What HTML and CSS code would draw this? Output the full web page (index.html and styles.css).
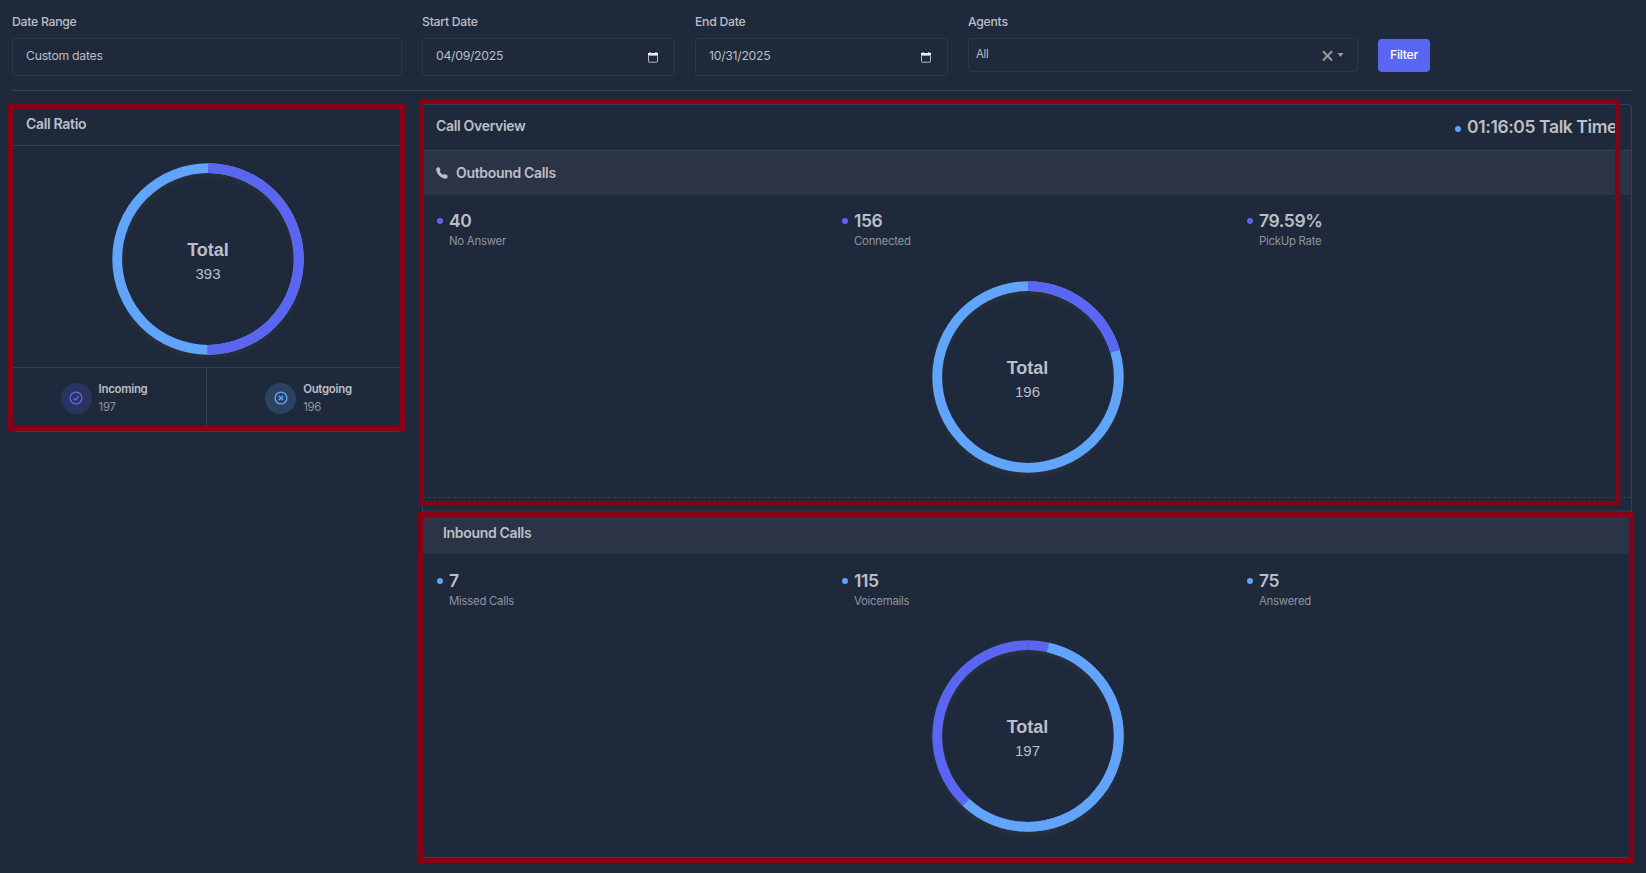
FILE: index.html
```html
<!DOCTYPE html>
<html lang="en">
  <head>
    <meta charset="UTF-8" />
    <meta name="viewport" content="width=device-width, initial-scale=1.0" />
    <title>Call Dashboard</title>
    <link rel="stylesheet" href="styles.css">
  </head>
  <body>
    <div class="filters">
      <div class="field">
        <div class="field-label">Date Range</div>
        <div class="field-input">Custom dates</div>
      </div>
      <div class="field field-sm">
        <div class="field-label">Start Date</div>
        <div class="field-input">
          04/09/2025
          <svg class="calendar" width="10" height="11" viewBox="0 0 10 11">
            <path d="M1.5 0h1v1h5V0h1v1H10v2.500H0V1h1.5z" fill="#fff" />
            <rect x="0.5" y="3" width="9" height="7.2" rx="0.6" fill="none" stroke="#b4b8be" />
          </svg>
        </div>
      </div>
      <div class="field field-sm">
        <div class="field-label">End Date</div>
        <div class="field-input">
          10/31/2025
          <svg class="calendar" width="10" height="11" viewBox="0 0 10 11">
            <path d="M1.5 0h1v1h5V0h1v1H10v2.500H0V1h1.5z" fill="#fff" />
            <rect x="0.5" y="3" width="9" height="7.2" rx="0.6" fill="none" stroke="#b4b8be" />
          </svg>
        </div>
      </div>
      <div class="field">
        <div class="field-label">Agents</div>
        <div class="field-input field-select">
          All
          <svg class="select-icons" width="22" height="12" viewBox="0 0 22 12">
            <path d="M1 1.200l9 9.300M10 1.200l-9 9.300" fill="none" stroke="#999" stroke-width="2" />
            <path d="M15.500 3h6l-3 4z" fill="#999" />
          </svg>
        </div>
      </div>
      <button class="filter-button">Filter</button>
    </div>

    <div class="panels">
      <div class="card ratio-card">
        <div class="card-header">Call Ratio</div>
        <div class="ratio-chart">
          <div class="donut">
            <svg class="donut-ring" width="210" height="210" viewBox="-105 -105 210 210">
              <circle class="slice blue" r="90.8" />
              <circle class="slice purple" r="90.8" pathLength="393" stroke-dasharray="197 196" />
            </svg>
            <div class="donut-label">
              <div class="donut-title">Total</div>
              <div class="donut-value">393</div>
            </div>
          </div>
        </div>
        <div class="ratio-footer">
          <div class="ratio-item">
            <div class="ratio-icon icon-purple">
              <svg width="14" height="14" viewBox="0 0 14 14">
                <circle cx="7" cy="7" r="5.9" />
                <path d="M4.4 7.2l1.8 1.8 3.6-3.8" />
              </svg>
            </div>
            <div>
              <div class="ratio-name">Incoming</div>
              <div class="ratio-value">197</div>
            </div>
          </div>
          <div class="ratio-item">
            <div class="ratio-icon icon-blue">
              <svg width="14" height="14" viewBox="0 0 14 14">
                <circle cx="7" cy="7" r="5.9" />
                <path d="M4.9 4.9l4.2 4.2M9.1 4.9l-4.2 4.2" />
              </svg>
            </div>
            <div>
              <div class="ratio-name">Outgoing</div>
              <div class="ratio-value">196</div>
            </div>
          </div>
        </div>
        <div class="highlight highlight-ratio"></div>
      </div>

      <div class="card overview-card">
        <div class="card-header overview-header">
          <span>Call Overview</span>
          <span class="talk-time"><i class="dot dot-blue"></i>01:16:05 Talk Time</span>
        </div>

        <div class="section-title">
          <svg class="phone" width="12" height="12" viewBox="0 0 12 12">
            <path d="M.5 1Q1.800-.2 3.100.3l1.500 2.700-1 1.600q1.200 2.100 3.200 3.200L8.900 7l2.700 1.600q.4 1.800-1 2.900Q7.500 12.400 3.500 9-.8 4.800.5 1z" fill="#bcbfc6" />
          </svg>
          Outbound Calls
        </div>
        <div class="stats">
          <div class="stat">
            <i class="dot"></i>
            <div>
              <div class="stat-value">40</div>
              <div class="stat-name">No Answer</div>
            </div>
          </div>
          <div class="stat">
            <i class="dot"></i>
            <div>
              <div class="stat-value">156</div>
              <div class="stat-name">Connected</div>
            </div>
          </div>
          <div class="stat">
            <i class="dot"></i>
            <div>
              <div class="stat-value">79.59%</div>
              <div class="stat-name">PickUp Rate</div>
            </div>
          </div>
        </div>
        <div class="overview-chart">
          <div class="donut">
            <svg class="donut-ring" width="210" height="210" viewBox="-105 -105 210 210">
              <circle class="slice blue" r="90.8" />
              <circle class="slice purple" r="90.8" pathLength="196" stroke-dasharray="40 156" />
            </svg>
            <div class="donut-label">
              <div class="donut-title">Total</div>
              <div class="donut-value">196</div>
            </div>
          </div>
        </div>

        <div class="divider"></div>

        <div class="section-title section-inbound">Inbound Calls</div>
        <div class="stats stats-inbound">
          <div class="stat">
            <i class="dot dot-blue"></i>
            <div>
              <div class="stat-value">7</div>
              <div class="stat-name">Missed Calls</div>
            </div>
          </div>
          <div class="stat">
            <i class="dot dot-blue"></i>
            <div>
              <div class="stat-value">115</div>
              <div class="stat-name">Voicemails</div>
            </div>
          </div>
          <div class="stat">
            <i class="dot dot-blue"></i>
            <div>
              <div class="stat-value">75</div>
              <div class="stat-name">Answered</div>
            </div>
          </div>
        </div>
        <div class="overview-chart">
          <div class="donut">
            <svg class="donut-ring" width="210" height="210" viewBox="-105 -105 210 210">
              <circle class="slice purple" r="90.8" />
              <circle class="slice blue" r="90.8" pathLength="197" stroke-dasharray="0 7 115 75" />
              <path class="seam" d="M0-96v10" />
            </svg>
            <div class="donut-label">
              <div class="donut-title">Total</div>
              <div class="donut-value">197</div>
            </div>
          </div>
        </div>
        <div class="highlight highlight-outbound"></div>
        <div class="highlight highlight-inbound"></div>
      </div>
    </div>
  </body>
</html>
```

FILE: styles.css
```css
* {
  box-sizing: border-box;
  letter-spacing: -0.023em;
}

body {
  margin: 0;
  min-height: 100vh;
  padding: 14px 14px 0 12px;
  background-color: #1e293b;
  color: #bcbfc6;
  font-family: Inter, sans-serif;
  font-size: 12.25px;
  line-height: 16px;
}

.filters {
  display: flex;
  align-items: flex-start;
  gap: 20px;
  height: 77px;
  border-bottom: 1px solid #334155;
}

.field {
  width: 390px;
}

.field-sm {
  width: 253px;
}

.field-label {
  font-weight: 500;
  margin-bottom: 8px;
}

.field-input {
  display: flex;
  align-items: center;
  justify-content: space-between;
  height: 38px;
  padding: 0 16px 3px 13px;
  border: 1px solid #2b3648;
  border-radius: 3px;
}

.calendar {
  margin-top: 4px;
}

.field-select {
  height: 34px;
  padding: 0 13px 2px 7px;
  font-size: 11.4px;
}

.select-icons {
  margin-top: 4px;
}

.filter-button {
  width: 52px;
  height: 33px;
  margin-top: 25px;
  padding: 0 0 2px;
  border: none;
  border-radius: 4px;
  background-color: #5a66f1;
  color: #fff;
  font: 500 12.25px Inter, sans-serif;
}

.panels {
  display: flex;
  align-items: flex-start;
  gap: 20px;
  margin-top: 13px;
}

.card {
  position: relative;
  border: 1px solid #334155;
  border-radius: 4px;
}

.ratio-card {
  width: 390px;
  height: 328px;
}

.card-header {
  display: flex;
  height: 41px;
  padding: 11px 13px 0;
  border-bottom: 1px solid #334155;
  font-size: 14px;
  font-weight: 600;
}

.ratio-chart {
  display: flex;
  justify-content: center;
  height: 222px;
  padding: 8px 0 0 2px;
  border-bottom: 1px solid #334155;
}

.donut {
  display: grid;
  place-items: center;
  width: 210px;
  height: 210px;
}

.donut-ring,
.donut-label {
  grid-area: 1 / 1;
}

.donut-ring {
  filter: drop-shadow(0 4px 2px rgba(60, 60, 60, 0.35));
}

.slice {
  fill: none;
  stroke-width: 9.8;
  transform: rotate(-90deg);
}

.purple {
  stroke: #5a66f1;
}

.blue {
  stroke: #60a5fa;
}

.seam {
  stroke: #5059d4;
}

.donut-label {
  padding-top: 5px;
  font-family: "Liberation Sans", Arial, sans-serif;
  text-align: center;
}

.donut-title {
  font-size: 18px;
  font-weight: bold;
  line-height: 24px;
  letter-spacing: 0;
}

.donut-value {
  font-size: 15px;
  line-height: 24px;
  letter-spacing: 0;
}

.ratio-footer {
  display: flex;
  height: 64px;
}

.ratio-item {
  display: flex;
  align-items: center;
  justify-content: center;
  gap: 7px;
  width: 193px;
  padding: 0 11px 4px 0;
}

.ratio-item + .ratio-item {
  width: 195px;
  padding: 0 0 4px 9px;
  border-left: 1px solid #334155;
}

.ratio-icon {
  display: flex;
  align-items: center;
  justify-content: center;
  width: 31px;
  height: 31px;
  border-radius: 50%;
}

.ratio-icon svg {
  fill: none;
  stroke-width: 1.4;
}

.icon-purple {
  background-color: #2a355f;
  stroke: #5a66f1;
}

.icon-blue {
  background-color: #2b4261;
  stroke: #60a5fa;
}

.ratio-name {
  font-size: 11.4px;
  font-weight: 600;
  line-height: 18px;
}

.ratio-value,
.stat-name {
  color: #8e949d;
  font-size: 11.4px;
  line-height: 18px;
}

.overview-card {
  width: 1210px;
  height: 754px;
}

.overview-header {
  justify-content: space-between;
  height: 46px;
  padding: 13px 14px 0 13px;
}

.talk-time {
  display: flex;
  align-items: center;
  height: 18px;
  font-size: 17.5px;
}

.dot {
  flex: none;
  width: 6px;
  height: 6px;
  border-radius: 50%;
  background-color: #5a66f1;
}

.dot-blue {
  background-color: #60a5fa;
}

.talk-time .dot {
  margin: 3px 6px 0 0;
}

.section-title {
  display: flex;
  align-items: center;
  height: 44px;
  padding: 0 13px 1px;
  background-color: #2b3346;
  font-size: 14px;
  font-weight: 600;
}

.phone {
  margin-right: 8px;
}

.section-inbound {
  padding: 2px 20px 0;
}

.stats {
  display: flex;
  height: 61px;
  padding: 14px 0 0 14px;
}

.stats-inbound {
  padding-top: 15px;
}

.stat {
  display: flex;
  gap: 6px;
  width: 405px;
}

.stat .dot {
  margin-top: 9px;
}

.stat:last-child {
  width: auto;
}

.stat-value {
  font-size: 17.5px;
  font-weight: 600;
  line-height: 23px;
}

.overview-chart {
  display: flex;
  justify-content: center;
  padding: 16px 0 0 1px;
}

.divider {
  height: 13px;
  margin-top: 15px;
  border-top: 1px dashed #334155;
}

/* marker frames drawn over the cards */
.highlight {
  position: absolute;
  border: 5px solid #880015;
}

.highlight-ratio {
  top: -1px;
  left: -5px;
  width: 397px;
  height: 327px;
}

.highlight-outbound {
  top: -6px;
  left: -4px;
  width: 1201px;
  height: 407px;
}

.highlight-inbound {
  top: 407px;
  left: -5px;
  width: 1216px;
  height: 351px;
}
```
